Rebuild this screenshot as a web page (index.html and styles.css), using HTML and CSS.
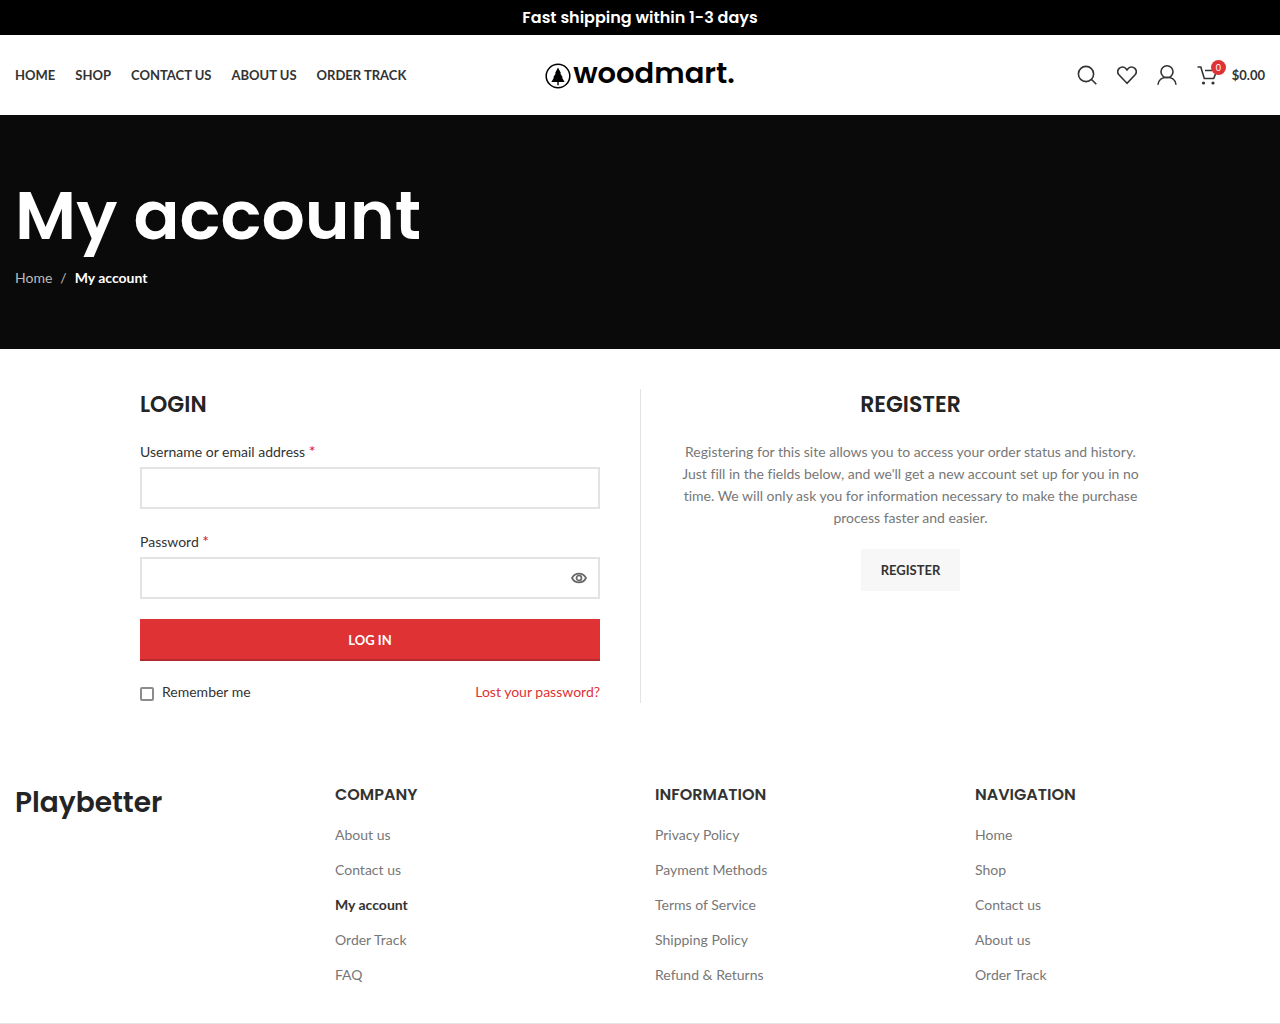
FILE: index.html
```html
<!DOCTYPE html>
<html lang="en">
<head>
<meta charset="utf-8">
<meta name="viewport" content="width=device-width, initial-scale=1">
<title>My account</title>
<link rel="stylesheet" href="styles.css">
</head>
<body>
<div class="topbar">Fast shipping within 1-3 days</div>

<header class="header">
  <nav class="main-nav" aria-label="Main">
    <a href="#">Home</a>
    <a href="#">Shop</a>
    <a href="#">Contact us</a>
    <a href="#">About us</a>
    <a href="#">Order Track</a>
  </nav>
  <a class="logo" href="#">
    <svg class="logo-mark" viewBox="0 0 26 26" aria-hidden="true">
      <circle cx="13" cy="13" r="11.8" fill="none" stroke="#000" stroke-width="1.5"/>
      <path d="M13 4.500 10 10.200h.8L8.200 14.600h.8L6.400 18.900h5.900v3.300h1.400v-3.300h5.900L17 14.600h.8l-2.600-4.400h.8z"/>
    </svg>
    <span>woodmart.</span>
  </a>
  <div class="tools">
    <a class="tool" href="#" aria-label="Search">
      <svg viewBox="0 0 20 20"><circle cx="9" cy="9" r="7.600"/><path d="M14.300 14.300l5 5"/></svg>
    </a>
    <a class="tool" href="#" aria-label="Wishlist">
      <svg viewBox="0 0 20 20"><path d="M10 18.300 1.900 9.800C.4 7.900.5 5.200 2.200 3.400c1.900-1.900 4.900-1.900 6.600.1L10 4.900l1.200-1.400c1.700-2 4.700-2 6.600-.1 1.700 1.800 1.800 4.500.3 6.400z"/></svg>
    </a>
    <a class="tool" href="#" aria-label="My account">
      <svg viewBox="0 0 20 20"><circle cx="10" cy="6.800" r="6"/><path d="M1 19.800c.4-4.800 4.200-7.500 9-7.500s8.600 2.700 9 7.500"/></svg>
    </a>
    <a class="tool cart" href="#" aria-label="Shopping cart">
      <svg viewBox="0 0 20 20"><path d="M.5 2h3.300l3.500 11.500h9.400L18.500 9M8 5.500h7"/><g class="wheels"><circle cx="6.500" cy="18" r="1.600"/><circle cx="16" cy="18" r="1.600"/></g></svg>
      <span class="badge">0</span>
      <span class="total">$0.00</span>
    </a>
  </div>
</header>

<section class="page-title">
  <h1>My account</h1>
  <nav class="breadcrumb" aria-label="Breadcrumb">
    <a href="#">Home</a><span class="sep">/</span><strong>My account</strong>
  </nav>
</section>

<main class="account">
  <section class="login">
    <h2>Login</h2>
    <form>
      <label class="field-label" for="username">Username or email address <span class="required">*</span></label>
      <input class="field" id="username" type="text">
      <label class="field-label" for="password">Password <span class="required">*</span></label>
      <div class="password">
        <input class="field" id="password" type="password">
        <button class="reveal" type="button" aria-label="Show password">
          <svg viewBox="0 0 16 12"><path d="M1 6c1.500-3 4-4.400 7-4.400S13.500 3 15 6c-1.500 3-4 4.400-7 4.400S2.500 9 1 6z"/><circle cx="8" cy="6" r="2.500"/></svg>
        </button>
      </div>
      <button class="btn btn-primary" type="submit">Log in</button>
      <div class="login-foot">
        <label class="remember"><input type="checkbox">Remember me</label>
        <a href="#">Lost your password?</a>
      </div>
    </form>
  </section>
  <section class="register">
    <h2>Register</h2>
    <p>Registering for this site allows you to access your order status and history. Just fill in the fields below, and we'll get a new account set up for you in no time. We will only ask you for information necessary to make the purchase process faster and easier.</p>
    <button class="btn btn-light" type="button">Register</button>
  </section>
</main>

<footer class="footer">
  <div class="brand">Playbetter</div>
  <nav aria-labelledby="f-company">
    <h3 id="f-company">Company</h3>
    <ul>
      <li><a href="#">About us</a></li>
      <li><a href="#">Contact us</a></li>
      <li><a class="current" href="#">My account</a></li>
      <li><a href="#">Order Track</a></li>
      <li><a href="#">FAQ</a></li>
    </ul>
  </nav>
  <nav aria-labelledby="f-information">
    <h3 id="f-information">Information</h3>
    <ul>
      <li><a href="#">Privacy Policy</a></li>
      <li><a href="#">Payment Methods</a></li>
      <li><a href="#">Terms of Service</a></li>
      <li><a href="#">Shipping Policy</a></li>
      <li><a href="#">Refund &amp; Returns</a></li>
    </ul>
  </nav>
  <nav aria-labelledby="f-navigation">
    <h3 id="f-navigation">Navigation</h3>
    <ul>
      <li><a href="#">Home</a></li>
      <li><a href="#">Shop</a></li>
      <li><a href="#">Contact us</a></li>
      <li><a href="#">About us</a></li>
      <li><a href="#">Order Track</a></li>
    </ul>
  </nav>
</footer>
</body>
</html>
```
FILE: styles.css
```css
:root {
  --title-font: Poppins, Inter, sans-serif;
  --text-font: Lato, sans-serif;
  --accent: #df3234;
  --dark: #333;
  --title: #242424;
  --muted: #777;
  --line: #e3e3e3;
}

* { box-sizing: border-box; }

body {
  margin: 0;
  background: #fff;
  color: var(--muted);
  font: 14px/22px var(--text-font);
  font-variant-ligatures: no-common-ligatures;
}

a { color: inherit; text-decoration: none; }
h1, h2, h3, p, ul { margin: 0; }
ul { padding: 0; list-style: none; }

.topbar {
  padding: 7px 15px 6px;
  background: #000;
  color: #fff;
  font: 600 16px/22px var(--title-font);
  text-align: center;
}

.header {
  display: grid;
  grid-template-columns: 1fr auto 1fr;
  align-items: center;
  min-height: 80px;
  padding: 0 15px;
}

.main-nav {
  display: flex;
  gap: 20px;
  color: var(--dark);
  font-size: 13px;
  font-weight: 700;
  text-transform: uppercase;
  white-space: nowrap;
}

.logo {
  display: flex;
  align-items: flex-end;
  gap: 2px;
  padding-bottom: 5px;
  color: #000;
  font: 600 29px/32px var(--title-font);
}

.logo-mark { width: 26px; height: 26px; }

.tools {
  display: flex;
  justify-content: flex-end;
  gap: 20px;
  color: var(--dark);
}

.tool {
  position: relative;
  display: flex;
  align-items: center;
  gap: 15px;
}

.tool svg {
  width: 20px;
  height: 20px;
  fill: none;
  stroke: currentColor;
  stroke-width: 1.6;
}

.tool .wheels { fill: currentColor; stroke: none; }

.badge {
  position: absolute;
  top: -4px;
  left: 14px;
  width: 15px;
  height: 15px;
  border-radius: 50%;
  background: var(--accent);
  color: #fff;
  font-size: 9px;
  line-height: 15px;
  text-align: center;
}

.total { font-size: 13px; font-weight: 700; }

.page-title {
  padding: 60px 15px;
  background: #0a0a0a;
  color: #fff;
}

.page-title h1 {
  font: 600 68px/82px var(--title-font);
}

.breadcrumb {
  display: flex;
  gap: 8px;
  margin-top: 10px;
  color: #bbb;
}

.breadcrumb strong { color: #fff; font-weight: 700; }

.account {
  display: grid;
  grid-template-columns: 1fr 1fr;
  max-width: 1030px;
  margin: 0 auto;
  padding: 40px 15px;
}

.account h2 {
  margin-bottom: 21px;
  color: var(--title);
  font: 600 22px/31px var(--title-font);
  text-transform: uppercase;
}

.login { padding-right: 40px; }

.register {
  padding-left: 40px;
  border-left: 1px solid var(--line);
  text-align: center;
}

.register p { margin-bottom: 20px; }

.field-label {
  display: block;
  margin-bottom: 4px;
  color: var(--dark);
}

.required { color: #e01020; font-size: 16px; line-height: 16px; }

.field {
  display: block;
  width: 100%;
  height: 42px;
  margin-bottom: 22px;
  padding: 0 15px;
  border: 2px solid var(--line);
  background: #fff;
  color: var(--muted);
  font: inherit;
}

.password { position: relative; }
.password .field { margin-bottom: 20px; padding-right: 42px; }

.reveal {
  position: absolute;
  top: 0;
  right: 0;
  display: grid;
  place-items: center;
  width: 42px;
  height: 42px;
  padding: 0;
  border: 0;
  background: none;
  color: #666;
}

.reveal svg {
  width: 16px;
  height: 12px;
  fill: none;
  stroke: currentColor;
  stroke-width: 1.7;
}

.btn {
  height: 42px;
  padding: 0 20px;
  border: 0;
  font: 700 13px/18px var(--text-font);
  text-transform: uppercase;
}

.btn-primary {
  width: 100%;
  background: var(--accent);
  box-shadow: inset 0 -2px 0 #b52a2e;
  color: #fff;
}

.btn-light { background: #f7f7f7; color: var(--dark); }

.login-foot {
  display: flex;
  justify-content: space-between;
  margin-top: 20px;
  color: var(--accent);
}

.remember {
  display: flex;
  align-items: center;
  gap: 8px;
  color: var(--dark);
}

.remember input {
  appearance: none;
  width: 14px;
  height: 14px;
  margin: 3px 0 0;
  border: 2px solid #8c8c90;
  border-radius: 2px;
  background: #fff;
}

.footer {
  display: grid;
  grid-template-columns: repeat(4, 1fr);
  gap: 30px;
  padding: 41px 15px 31px;
  border-bottom: 1px solid var(--line);
}

.brand {
  color: var(--title);
  font: 600 28px/38px var(--title-font);
}

.footer h3 {
  margin-bottom: 11px;
  color: var(--dark);
  font: 600 16px/22px var(--title-font);
  text-transform: uppercase;
}

.footer li { line-height: 35px; }
.footer .current { color: var(--dark); font-weight: 700; }
```
